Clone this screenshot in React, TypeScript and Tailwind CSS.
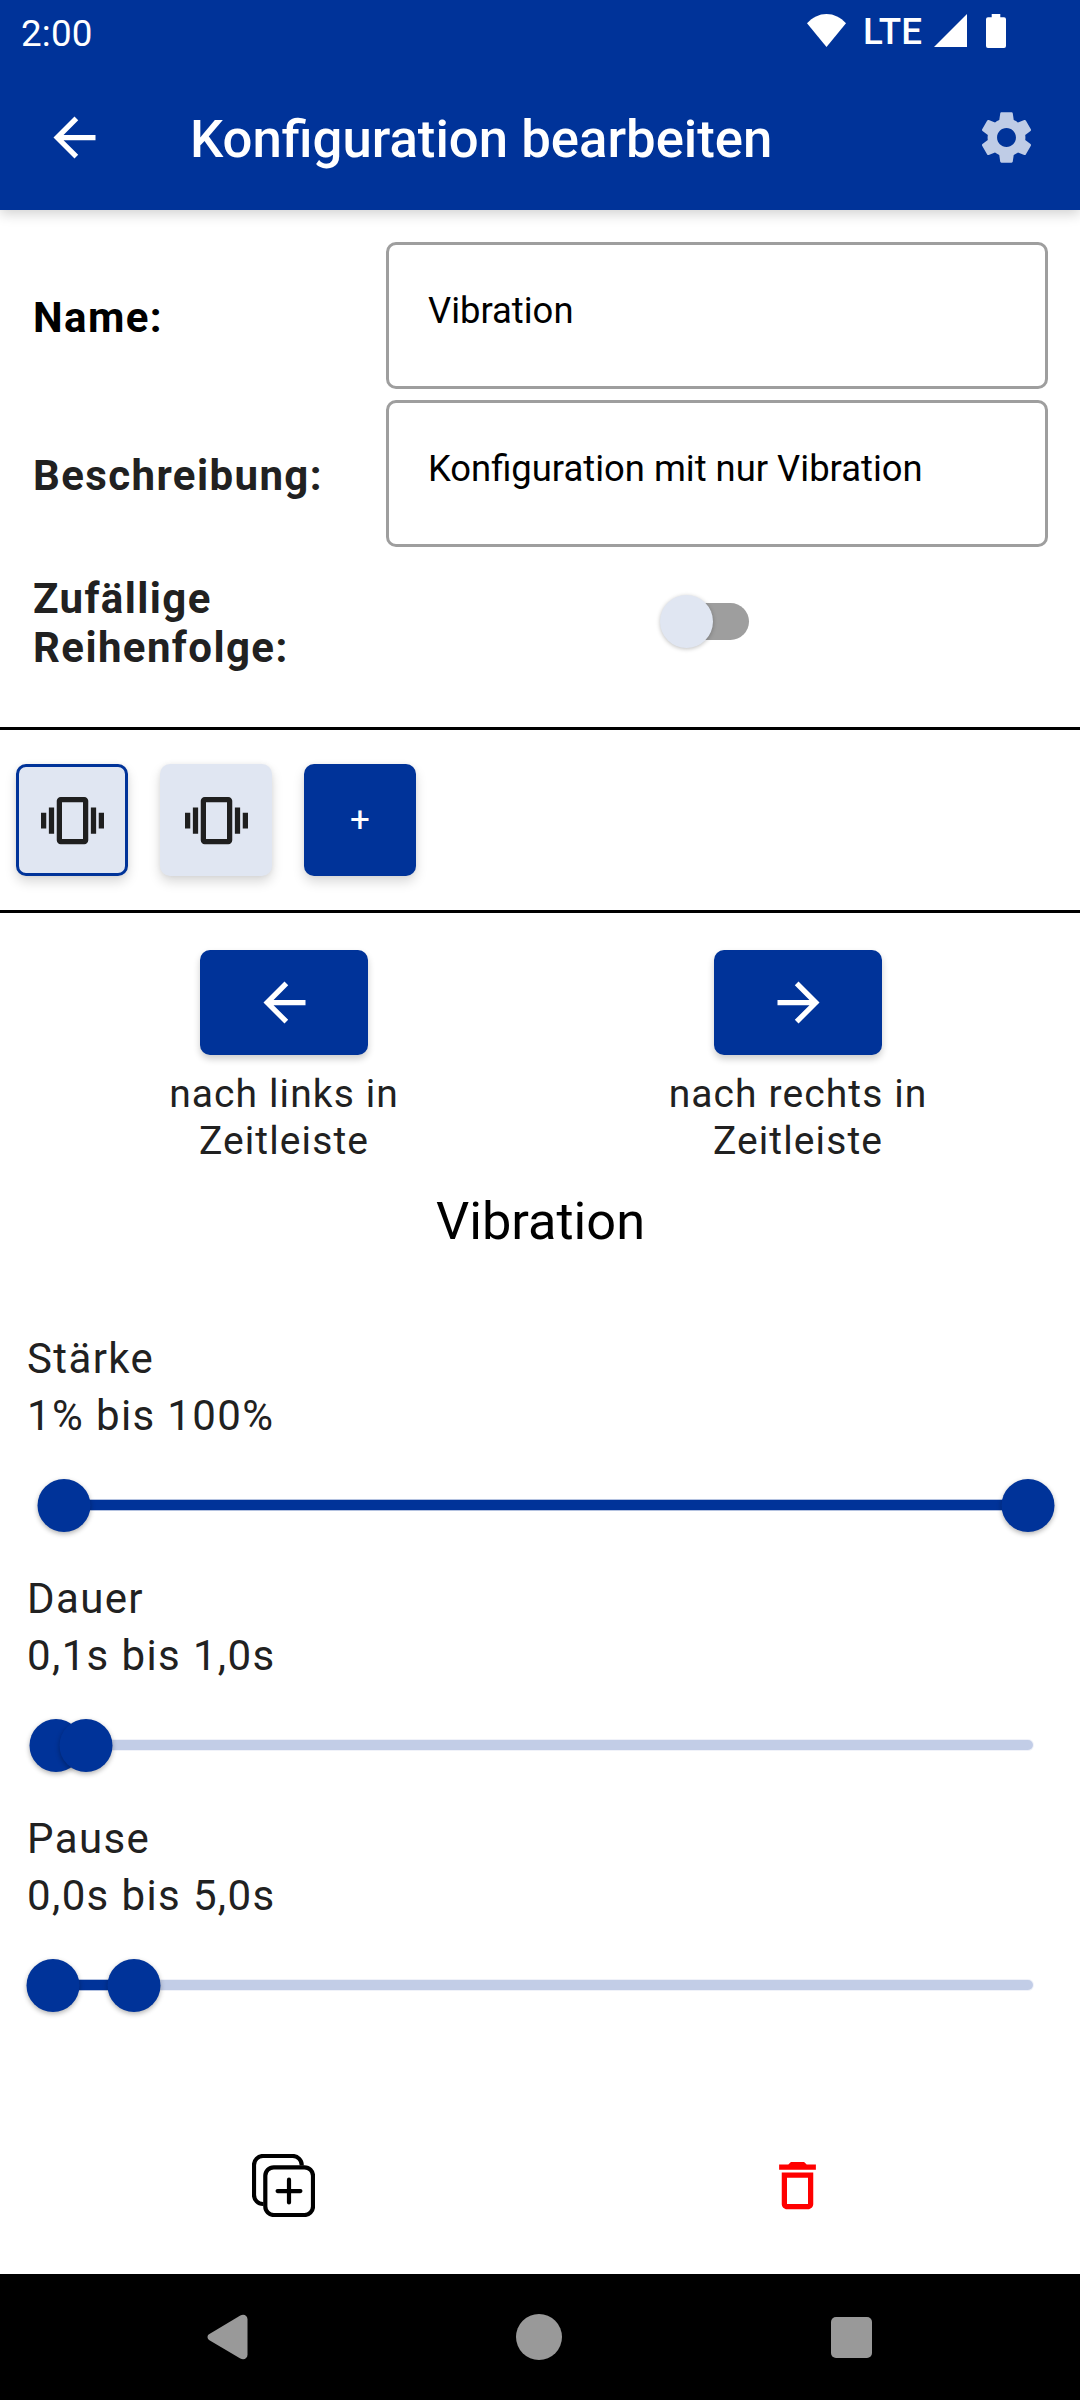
import type { ReactNode } from "react";
import {
  MdArrowBack,
  MdArrowForward,
  MdDeleteOutline,
  MdSettings,
  MdVibration,
} from "react-icons/md";

function StatusBar() {
  return (
    <div className="flex h-[63px] items-start justify-between pl-[21px] pr-[74px] text-[36.75px] leading-[43px] text-white">
      <span className="mt-[12px] tracking-[0.2px]">2:00</span>
      <div className="flex items-start">
        <svg className="mt-[14px] h-[33px] w-[39px]" viewBox="0 0 39 33" fill="currentColor">
          <path d="M19.5 33 0 9.3C5.5 3.4 12 0 19.5 0S33.500 3.400 39 9.300Z" />
        </svg>
        <span className="ml-[17px] mt-[10px] w-[62px] font-medium tracking-[0.3px]">LTE</span>
        <svg className="ml-[9px] mt-[14px] h-[33px] w-[33px]" viewBox="0 0 33 33" fill="currentColor">
          <path d="M33 0v33H0Z" />
        </svg>
        <svg className="ml-[19px] mt-[14px] h-[34px] w-[20px]" viewBox="0 0 20 34" fill="currentColor">
          <path d="M5.700 0h8.600v3.300H18a2 2 0 0 1 2 2V32a2 2 0 0 1-2 2H2a2 2 0 0 1-2-2V5.300a2 2 0 0 1 2-2h3.700Z" />
        </svg>
      </div>
    </div>
  );
}

function AppBar() {
  return (
    <div className="flex h-[147px] items-center pl-[43px] pr-[42px] pt-[2px] text-white">
      <MdArrowBack className="size-[63px]" />
      <h1 className="ml-[84px] flex-1 pt-[2px] text-[52.7px] font-medium leading-[62px]">
        Konfiguration bearbeiten
      </h1>
      <MdSettings className="size-[63px] text-[#bfcce6]" />
    </div>
  );
}

function Field({ label, value, labelClass }: { label: string; value: string; labelClass: string }) {
  return (
    <div className="flex h-[147px] items-center">
      <span className={`w-[353px] shrink-0 pt-[4px] text-[42px] font-bold leading-[49px] tracking-[1.4px] ${labelClass}`}>
        {label}
      </span>
      <div className="flex h-full w-[662px] items-start rounded-[10px] border-[3px] border-[#9e9e9e] pl-[39px] pt-[44px] text-[36.4px] leading-[43px] text-black">
        {value}
      </div>
    </div>
  );
}

function Tile({ children, tone }: { children: ReactNode; tone: string }) {
  return (
    <button
      className={`flex size-[112px] items-center justify-center rounded-[10px] shadow-[0_6px_12px_rgba(0,0,0,0.15),0_0_5px_rgba(0,0,0,0.06)] ${tone}`}
    >
      {children}
    </button>
  );
}

function MoveButton({ icon, line1 }: { icon: ReactNode; line1: string }) {
  return (
    <div className="flex w-[514px] flex-col items-center">
      <button className="flex h-[105px] w-[168px] items-center justify-center rounded-[10px] bg-[#003399] text-white shadow-[0_4px_7px_rgba(0,0,0,0.2)]">
        {icon}
      </button>
      <p className="mt-[16px] text-center text-[39px] leading-[47px] tracking-[1.1px] text-[#212121]">
        {line1}
        <br />
        Zeitleiste
      </p>
    </div>
  );
}

type RangeProps = { label: string; range: string; from: number; to: number };

const thumbClass =
  "absolute top-0 size-[53px] -translate-x-1/2 rounded-full bg-[#003399] shadow-[0_2px_5px_rgba(0,0,0,0.3)]";

function RangeSlider({ label, range, from, to }: RangeProps) {
  return (
    <div className="h-[240px] pt-[12px]">
      <div className="pl-[27px] text-[42px] leading-[57px] tracking-[1.38px] text-[#212121]">
        <div>{label}</div>
        <div>{range}</div>
      </div>
      <div className="relative mt-[35px] h-[53px]">
        <div className="absolute left-[47px] top-[21px] h-[10px] w-[986px] rounded-full bg-[#c2cde7] shadow-[0_0_0_1px_rgba(194,205,231,0.25)]" />
        <div
          className="absolute top-[21px] h-[10px] bg-[#003399] shadow-[0_0_0_1px_rgba(0,51,153,0.25)]"
          style={{ left: from, width: to - from }}
        />
        <div className={thumbClass} style={{ left: from }} />
        <div className={thumbClass} style={{ left: to }} />
      </div>
    </div>
  );
}

function DuplicateIcon() {
  return (
    <svg className="size-[63px]" viewBox="0 0 63 63" fill="none" stroke="black" strokeWidth="4.200" strokeLinecap="round">
      <path d="M49.700 11.500V11a9 9 0 0 0-9-9H11a9 9 0 0 0-9 9v30a9 9 0 0 0 9 9h.5" strokeLinecap="butt" />
      <rect x="13.300" y="13.300" width="47.700" height="47.700" rx="8.500" />
      <path d="M37 25.700v22.800M25.600 37.100h22.800" />
    </svg>
  );
}

function NavBar() {
  return (
    <div className="flex h-[126px] items-center bg-black pl-[207px] text-[#999999]">
      <svg className="h-[46px] w-[41px]" viewBox="0 0 41 46" fill="currentColor">
        <path d="M2 20.200 33.300 1.400C36.500-.3 40.500 1 40.500 5.500v35c0 4.500-4 5.800-7.200 4.100L2 26C0 24.600 0 21.600 2 20.200Z" />
      </svg>
      <div className="ml-[268px] size-[46px] rounded-full bg-[#999999]" />
      <div className="ml-[269px] size-[41px] rounded-[5px] bg-[#999999]" />
    </div>
  );
}

export default function App() {
  return (
    <div className="flex h-[2400px] w-[1080px] flex-col overflow-hidden bg-white font-['Roboto',sans-serif]">
      <header className="h-[210px] shrink-0 bg-[#003399] shadow-[0_4px_12px_rgba(0,0,0,0.18)]">
        <StatusBar />
        <AppBar />
      </header>

      <section className="flex h-[517px] flex-col gap-[11px] pl-[33px] pt-[32px]">
        <Field label="Name:" value="Vibration" labelClass="text-black" />
        <Field label="Beschreibung:" value="Konfiguration mit nur Vibration" labelClass="text-[#212121]" />
        <div className="flex items-start pt-[16px]">
          <span className="w-[627px] text-[42px] font-bold leading-[49px] tracking-[1.4px] text-[#212121]">
            Zufällige
            <br />
            Reihenfolge:
          </span>
          <div className="relative mt-[21px] flex h-[53px] w-[89px] items-center">
            <div className="ml-[8px] h-[37px] w-[81px] rounded-full bg-[#9e9e9e]" />
            <div className="absolute left-0 top-0 size-[53px] rounded-full bg-[#e0e6f2] shadow-[0_1px_4px_rgba(0,0,0,0.25)]" />
          </div>
        </div>
      </section>

      <section className="flex h-[186px] gap-8 border-y-[3px] border-black pl-4 pt-[34px]">
        <Tile tone="border-[3px] border-[#003399] bg-[#e0e6f2] text-[#1f1f1f]">
          <MdVibration className="size-[63px] shrink-0" />
        </Tile>
        <Tile tone="bg-[#e0e6f2] text-[#1f1f1f]">
          <MdVibration className="size-[63px] shrink-0" />
        </Tile>
        <Tile tone="bg-[#003399] pb-[2px] text-[35px] font-normal leading-[43px] text-white">+</Tile>
      </section>

      <section className="flex pl-[27px] pt-[37px]">
        <MoveButton icon={<MdArrowBack className="size-[63px]" />} line1="nach links in" />
        <MoveButton icon={<MdArrowForward className="size-[63px]" />} line1="nach rechts in" />
      </section>

      <h2 className="mt-[25px] pl-px text-center text-[52.3px] leading-[62px] text-black">Vibration</h2>

      <section className="mt-[66px]">
        <RangeSlider label="Stärke" range="1% bis 100%" from={63.5} to={1028} />
        <RangeSlider label="Dauer" range="0,1s bis 1,0s" from={55.5} to={85.5} />
        <RangeSlider label="Pause" range="0,0s bis 5,0s" from={52.5} to={133.5} />
      </section>

      <section className="mt-auto flex h-[120px] shrink-0 pl-[26px]">
        <div className="flex w-[514px] justify-center">
          <DuplicateIcon />
        </div>
        <div className="flex w-[514px] justify-center">
          <MdDeleteOutline className="size-[63px] text-[#ff0000]" />
        </div>
      </section>

      <NavBar />
    </div>
  );
}
